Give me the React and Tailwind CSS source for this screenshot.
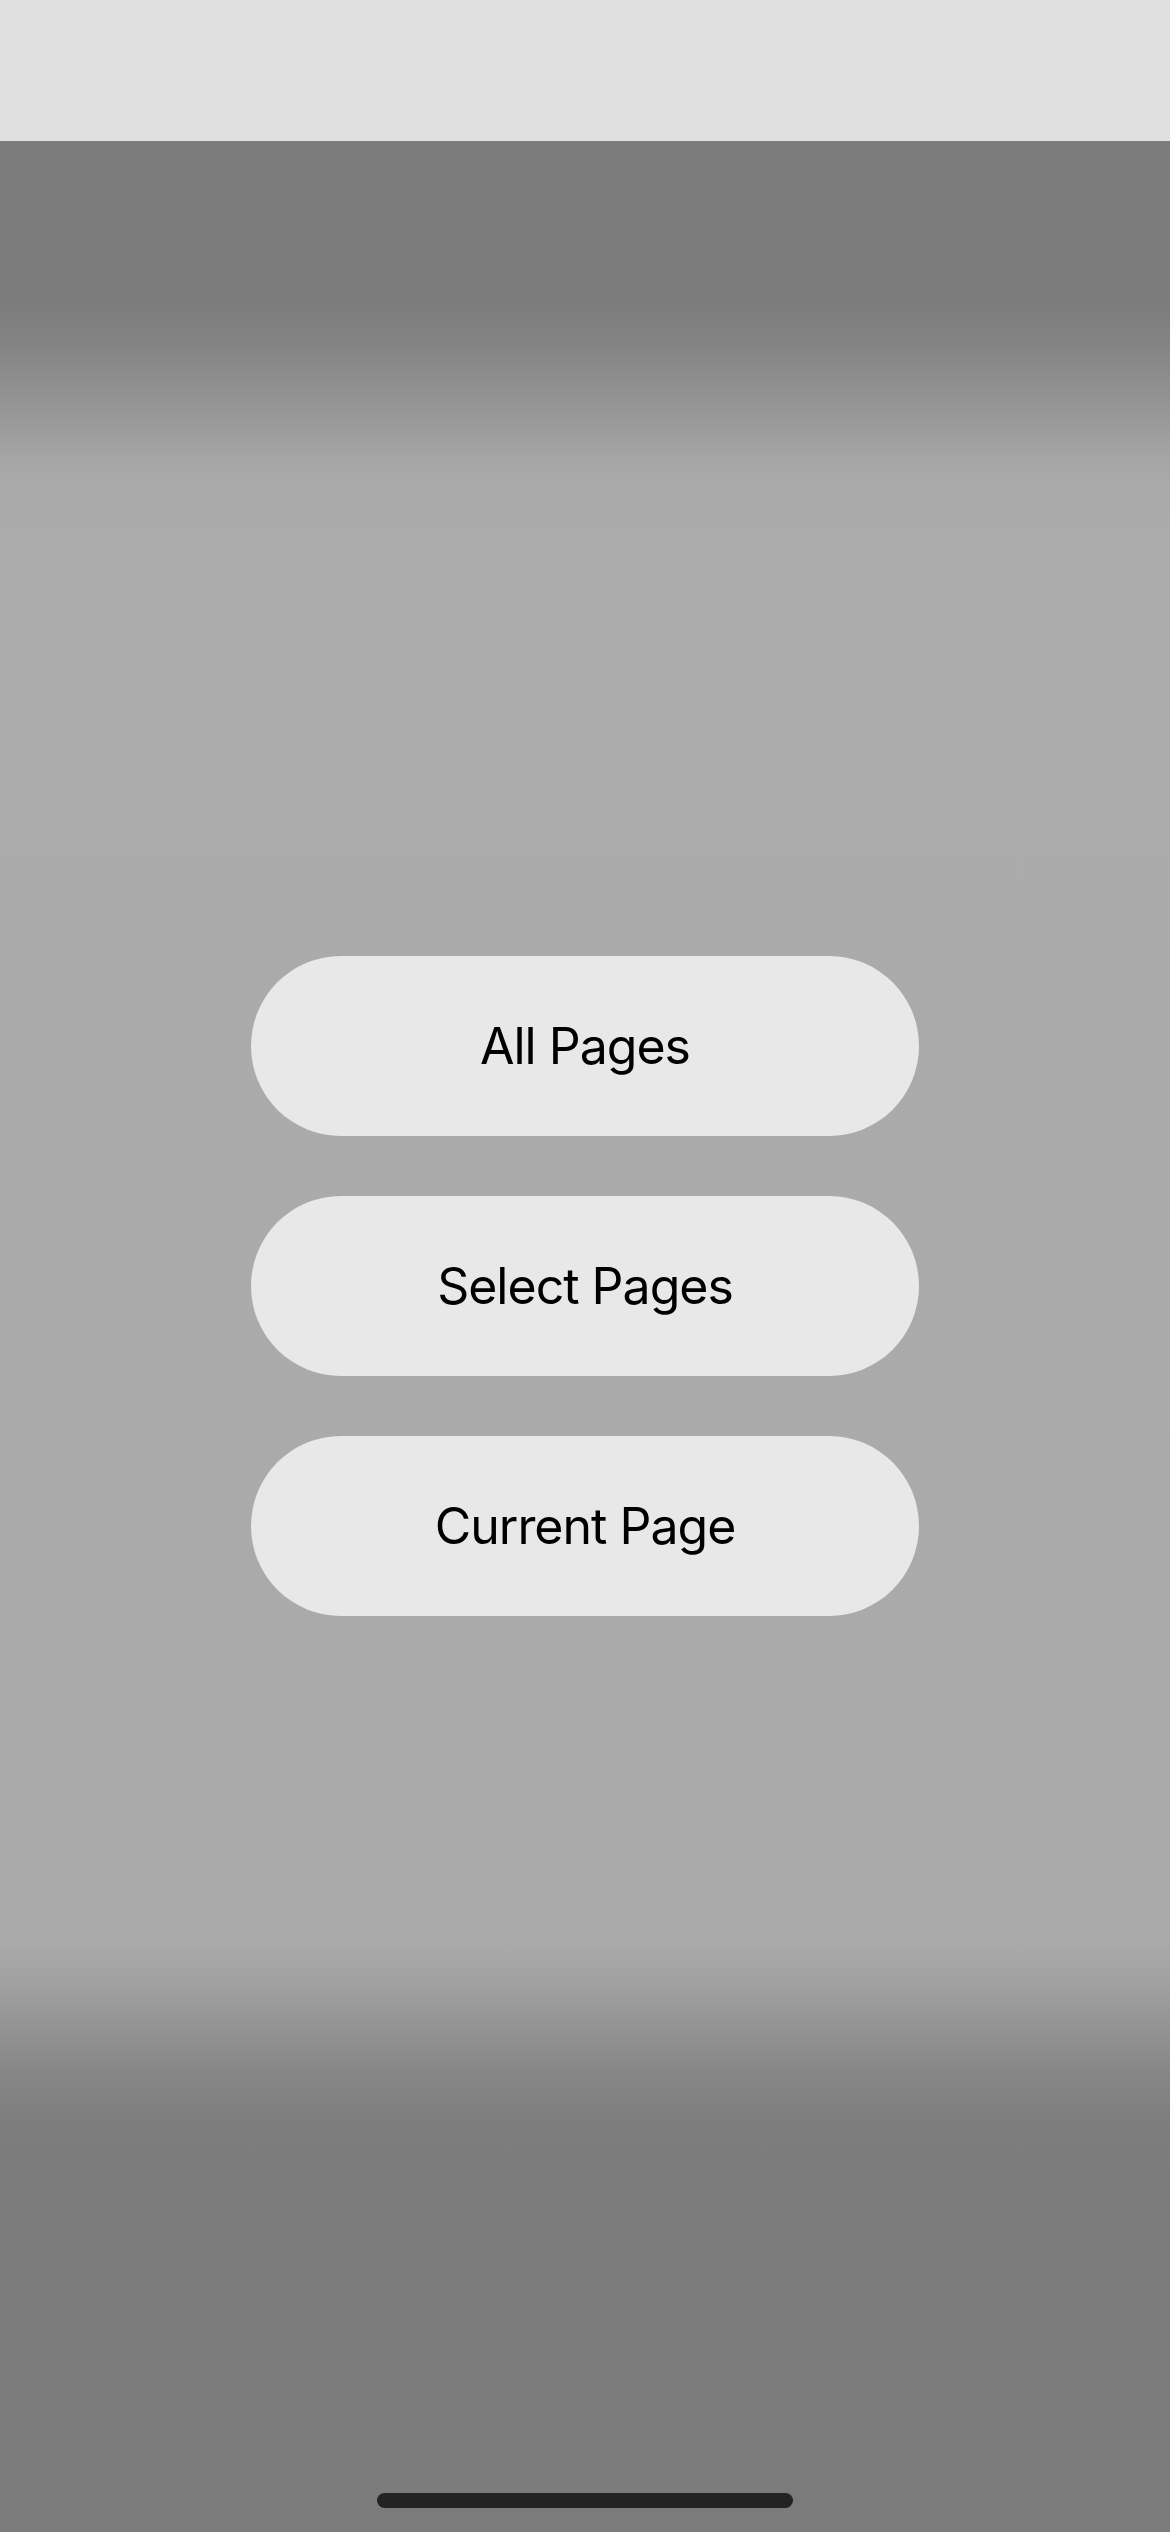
const options = ["All Pages", "Select Pages", "Current Page"];

export default function App() {
  return (
    <div className="flex h-[2532px] w-[1170px] flex-col font-['Inter','Liberation_Sans',sans-serif]">
      {/* barra superior */}
      <div className="h-[141px] w-full bg-[#e0e0e0]" />

      <div className="flex flex-1 flex-col items-center bg-[linear-gradient(180deg,#7c7c7c_166px,#848484_204px,#8f8f8f_244px,#9a9a9a_282px,#a4a4a4_314px,#aaaaaa_346px,#ababab_400px,#aaaaaa_1800px,#a0a0a0_1845px,#939393_1888px,#878787_1930px,#7e7e7e_1975px,#7b7b7b_2030px)]">
        <div className="flex flex-col gap-[60px] pt-[815px]">
          {options.map((label) => (
            <button
              key={label}
              className="flex h-[180px] w-[668px] items-center justify-center rounded-full bg-[#e8e8e8] text-[50px] font-normal tracking-[-1px] text-black"
            >
              {label}
            </button>
          ))}
        </div>

        {/* home indicator */}
        <div className="mb-[24px] mt-auto h-[15px] w-[416px] rounded-full bg-[#232323]" />
      </div>
    </div>
  );
}
